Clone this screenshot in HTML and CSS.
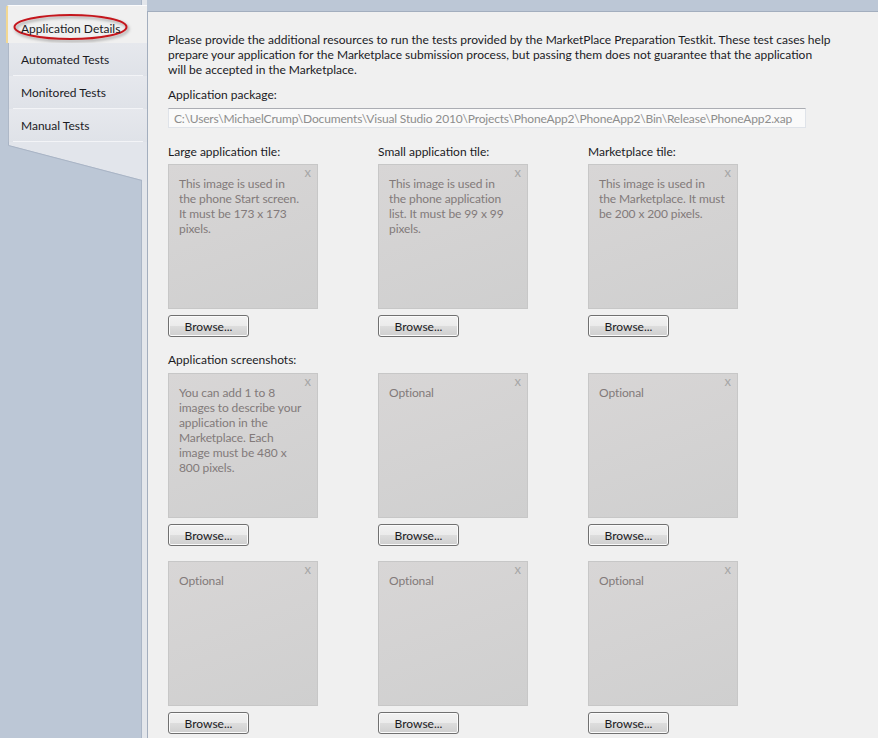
FILE: index.html
```html
<!DOCTYPE html>
<html>
<head>
<meta charset="utf-8">
<link rel="stylesheet" href="styles.css">
</head>
<body>
<div class="app">
  <aside class="sidebar">
    <div class="tab tab-selected">
      <span class="tab-label">Application Details</span>
      <svg class="ellipse" width="124" height="34" viewBox="0 0 124 34">
        <defs>
          <filter id="sh" x="-20%" y="-40%" width="140%" height="180%">
            <feDropShadow dx="1.5" dy="2" stdDeviation="1.5" flood-color="#000" flood-opacity="0.35"/>
          </filter>
        </defs>
        <ellipse cx="61.5" cy="15" rx="56" ry="12" fill="none" stroke="#c4161c" stroke-width="2" filter="url(#sh)"/>
      </svg>
    </div>
    <div class="tab"><span class="tab-label">Automated Tests</span></div>
    <div class="tab"><span class="tab-label">Monitored Tests</span></div>
    <div class="tab"><span class="tab-label">Manual Tests</span></div>
    <svg class="tab-foot" width="139" height="40" viewBox="0 0 139 40">
      <polygon points="0,0 139,0 139,40 134,40 134,38 0,3" fill="#e2e5eb"/>
      <polyline points="0.5,0 0.5,3.5 134,38.5" fill="none" stroke="#a9b4c5" stroke-width="1"/>
    </svg>
  </aside>
  <main class="content">
    <p class="intro">Please provide the additional resources to run the tests provided by the MarketPlace Preparation Testkit. These test cases help<br>prepare your application for the Marketplace submission process, but passing them does not guarantee that the application<br>will be accepted in the Marketplace.</p>
    <div class="label">Application package:</div>
    <div class="package">C:\Users\MichaelCrump\Documents\Visual Studio 2010\Projects\PhoneApp2\PhoneApp2\Bin\Release\PhoneApp2.xap</div>

    <div class="tiles tiles-top">
      <div class="cell">
        <div class="label">Large application tile:</div>
        <div class="tile"><span class="close">x</span><span class="hint">This image is used in<br>the phone Start screen.<br>It must be 173 x 173<br>pixels.</span></div>
        <button class="browse">Browse...</button>
      </div>
      <div class="cell">
        <div class="label">Small application tile:</div>
        <div class="tile"><span class="close">x</span><span class="hint">This image is used in<br>the phone application<br>list. It must be 99 x 99<br>pixels.</span></div>
        <button class="browse">Browse...</button>
      </div>
      <div class="cell">
        <div class="label">Marketplace tile:</div>
        <div class="tile"><span class="close">x</span><span class="hint">This image is used in<br>the Marketplace. It must<br>be 200 x 200 pixels.</span></div>
        <button class="browse">Browse...</button>
      </div>
    </div>

    <div class="label label-shots">Application screenshots:</div>
    <div class="tiles tiles-shots">
      <div class="cell">
        <div class="tile"><span class="close">x</span><span class="hint">You can add 1 to 8<br>images to describe your<br>application in the<br>Marketplace. Each<br>image must be 480 x<br>800 pixels.</span></div>
        <button class="browse">Browse...</button>
      </div>
      <div class="cell">
        <div class="tile"><span class="close">x</span><span class="hint">Optional</span></div>
        <button class="browse">Browse...</button>
      </div>
      <div class="cell">
        <div class="tile"><span class="close">x</span><span class="hint">Optional</span></div>
        <button class="browse">Browse...</button>
      </div>
      <div class="cell">
        <div class="tile"><span class="close">x</span><span class="hint">Optional</span></div>
        <button class="browse">Browse...</button>
      </div>
      <div class="cell">
        <div class="tile"><span class="close">x</span><span class="hint">Optional</span></div>
        <button class="browse">Browse...</button>
      </div>
      <div class="cell">
        <div class="tile"><span class="close">x</span><span class="hint">Optional</span></div>
        <button class="browse">Browse...</button>
      </div>
    </div>
  </main>
</div>
</body>
</html>
```

FILE: styles.css
```css
* { box-sizing: border-box; }
html, body {
  margin: 0;
  padding: 0;
  width: 878px;
  height: 738px;
  overflow: hidden;
  background: #bcc7d6;
  font-family: "Lato", "Open Sans", sans-serif;
  font-size: 12px;
  line-height: 15px;
  color: #1b1b1f;
}
.app {
  display: flex;
  height: 738px;
}
.sidebar {
  width: 147px;
  flex: none;
  padding-top: 5px;
  background: linear-gradient(to right, #bcc7d6 0 141px, #aab6c7 141px 142px, #e3e6eb 142px 147px);
  display: flex;
  flex-direction: column;
}
.tab {
  position: relative;
  margin-left: 8px;
  height: 33px;
  display: flex;
  align-items: center;
  padding-left: 12px;
  background: linear-gradient(to bottom, #e6e8ed, #dfe2e8);
  border-left: 1px solid #aeb8c7;
}
.tab::after {
  content: "";
  position: absolute;
  left: 4px;
  right: 4px;
  bottom: 0;
  height: 1px;
  background: #f3f4f7;
}
.tab-selected {
  margin-left: 6px;
  height: 38px;
  padding-left: 13px;
  padding-top: 8px;
  background: #f0f0f0;
  border-left: 2px solid #f3d892;
  border-top: 1px solid #fbfbfc;
  border-top-left-radius: 3px;
}
.tab-selected::after { display: none; }
.tab-label { position: relative; z-index: 1; }
.ellipse {
  position: absolute;
  left: 1px;
  top: 6px;
}
.tab-foot { display: block; margin-left: 8px; }

.content {
  flex: 1;
  margin-top: 11px;
  background: #f0f0f0;
  border-top: 1px solid #a3aebe;
  border-left: 1px solid #a3aebe;
  padding: 20px 0 0 20px;
}
.intro {
  margin: 0;
  white-space: nowrap;
}
.label {
  height: 15px;
  white-space: nowrap;
}
.intro + .label { margin-top: 10px; }
.package {
  margin-top: 6px;
  width: 638px;
  height: 20px;
  padding: 2px 0 0 5px;
  background: #fafafa;
  border: 1px solid #dfe3e9;
  border-top-color: #abadb3;
  color: #8d8d8d;
  white-space: nowrap;
  overflow: hidden;
  letter-spacing: -0.17px;
}
.tiles {
  display: grid;
  grid-template-columns: repeat(3, 150px);
  column-gap: 60px;
}
.tiles-top { margin-top: 16px; }
.tiles-top .label { margin-bottom: 5px; }
.label-shots { margin-top: 15px; margin-bottom: 6px; }
.tiles-shots { row-gap: 15px; }
.cell {
  display: flex;
  flex-direction: column;
  align-items: flex-start;
}
.tile {
  position: relative;
  width: 150px;
  height: 145px;
  border: 1px solid #c7c7c7;
  background: linear-gradient(160deg, #d8d6d6, #cfcfcf);
  padding: 11px 2px 0 10px;
  color: #827a7a;
}
.hint {
  display: block;
  white-space: nowrap;
  letter-spacing: -0.1px;
}
.close {
  position: absolute;
  right: 6px;
  top: 0;
  color: #a6a6a6;
  font-size: 13px;
}
.browse {
  margin-top: 6px;
  width: 81px;
  height: 22px;
  padding: 0;
  font-family: inherit;
  font-size: 12px;
  color: #1b1b1f;
  border: 1px solid #707070;
  border-radius: 3px;
  background: linear-gradient(to bottom, #f2f2f2 0, #ebebeb 50%, #dddddd 51%, #cfcfcf 100%);
  box-shadow: inset 0 0 0 1px #fbfbfb;
}
```
